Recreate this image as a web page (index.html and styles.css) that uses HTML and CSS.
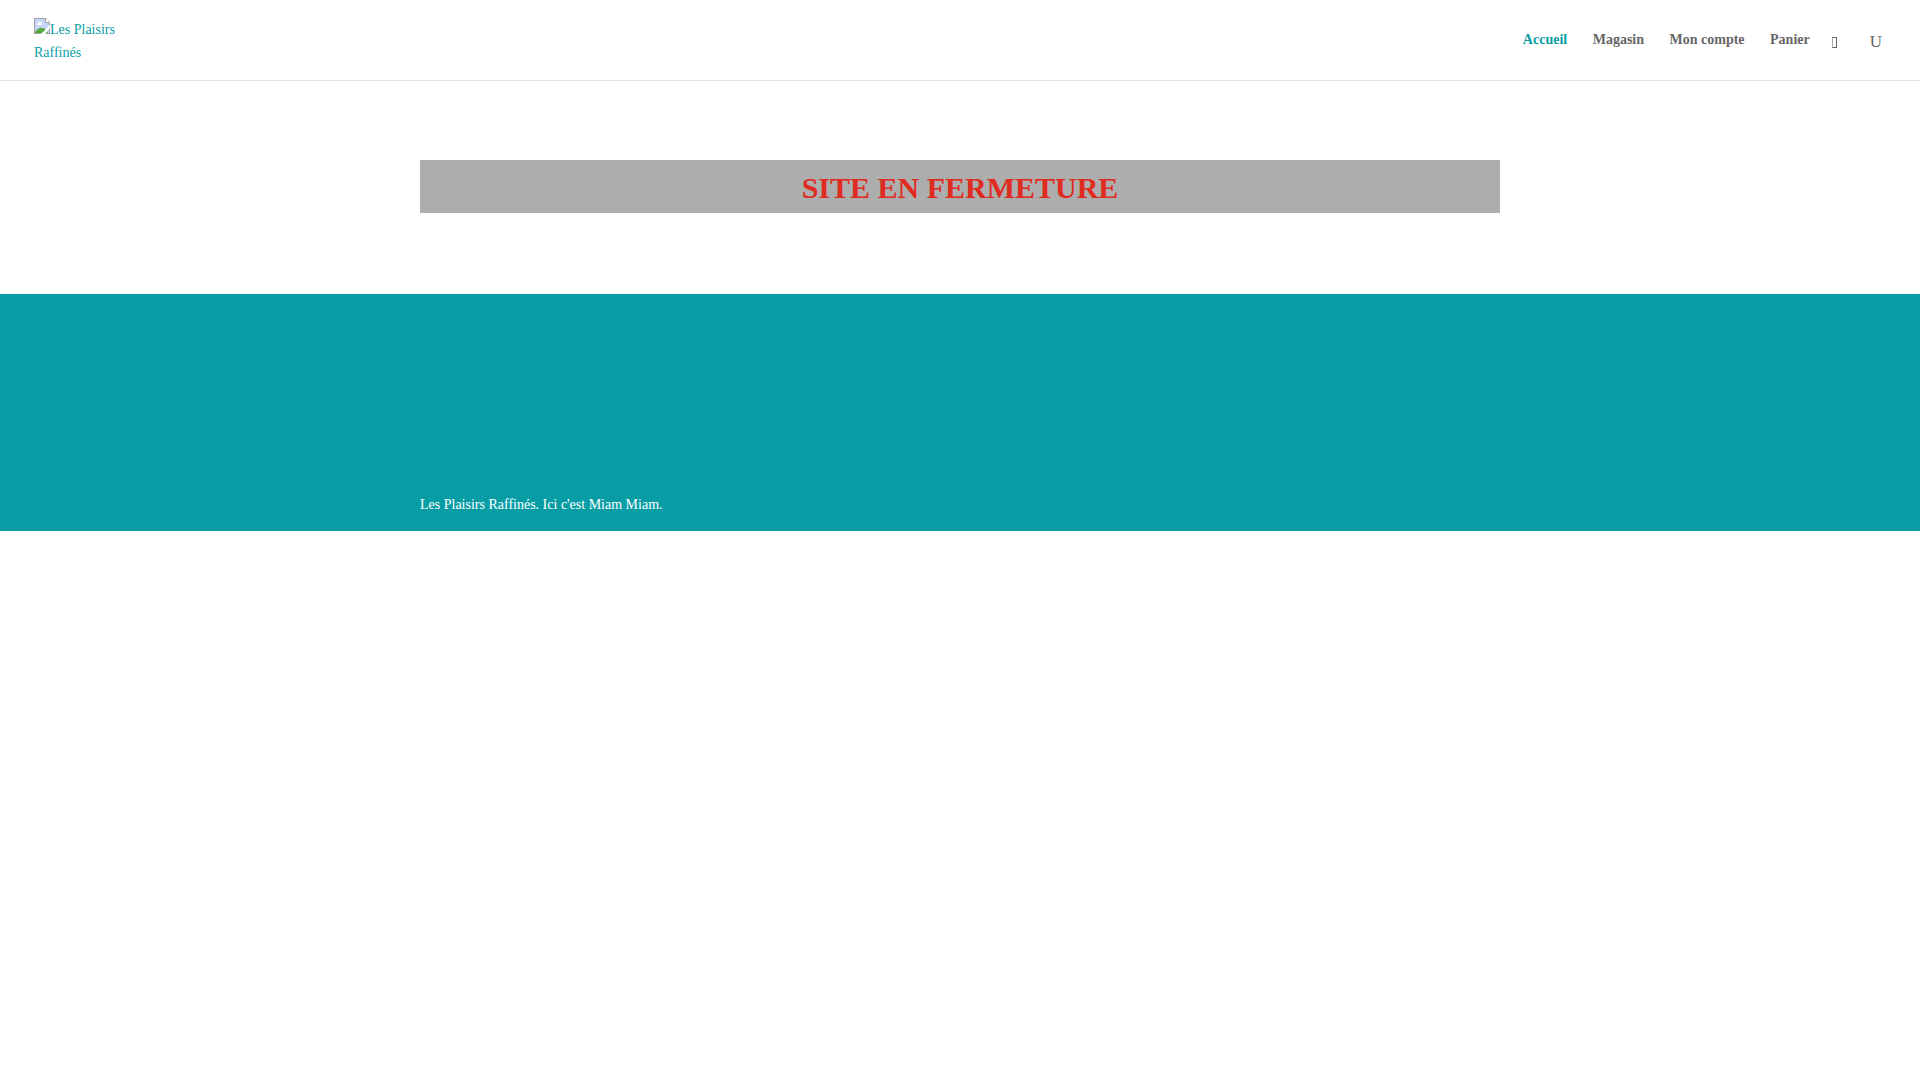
FILE: index.html
```html
<!DOCTYPE html>
<html lang="fr">
<head>
<meta charset="utf-8">
<title>Les Plaisirs Raffinés</title>
<link rel="stylesheet" href="styles.css">
</head>
<body>
<header class="site-header">
  <a class="logo" href="#"><svg class="logo-icon" viewBox="0 0 16 16" aria-hidden="true"><path d="M0 0h12l4 4v12H0z" fill="#a3a3a3"/><path d="M1 1h11l3 3v11H1z" fill="#c5d6fa"/><path d="M3 7V6c0-1 1-1 1-1 0-2 3-2 3 0 1 0 1 1 1 2z" fill="#fff"/><path d="M1 15v-1c2-3 5-5 7-4 3 0 5 2 6 5z" fill="#55a83b"/><path d="M11.500 0v4.500H16" fill="#fff" stroke="#a3a3a3"/><path d="M7 16l9-9v3l-5 6z" fill="#fff"/></svg>Les Plaisirs Raffinés</a>
  <div class="header-tools">
    <nav class="main-nav">
      <a class="nav-link current" href="#">Accueil</a>
      <a class="nav-link" href="#">Magasin</a>
      <a class="nav-link" href="#">Mon compte</a>
      <a class="nav-link" href="#">Panier</a>
    </nav>
    <a class="cart" href="#" aria-label="Voir le panier"></a>
    <button class="search" type="button" aria-label="Rechercher">U</button>
  </div>
</header>
<main class="content">
  <h1 class="notice">SITE EN FERMETURE</h1>
</main>
<footer class="site-footer">
  <p class="footer-text">Les Plaisirs Raffinés. Ici c'est Miam Miam.</p>
</footer>
</body>
</html>
```
FILE: styles.css
```css
* { box-sizing: border-box; }

body {
  margin: 0;
  background: #fff;
  color: #666;
  font: 14px/24px "Liberation Serif", "Times New Roman", serif;
}

a { text-decoration: none; }

.site-header {
  display: flex;
  justify-content: space-between;
  align-items: flex-start;
  padding: 18px 38px 16px 34px;
  border-bottom: 1px solid #e0e0e0;
}

.logo {
  width: 96px;
  color: #089da5;
  line-height: 23px;
}

.logo-icon {
  width: 16px;
  height: 16px;
}

.header-tools {
  display: flex;
  align-items: flex-start;
  padding-top: 10px;
}

.nav-link {
  margin-left: 22px;
  color: #666;
  font-weight: bold;
}

.nav-link.current { color: #089da5; }

.cart {
  width: 5px;
  height: 11px;
  margin: 9px 33px 0 22px;
  border: 1px solid #666;
  border-left-color: #aaa;
}

.search {
  padding: 2px 0 0;
  border: 0;
  background: none;
  color: #666;
  font: 17px/24px "Liberation Serif", "Times New Roman", serif;
}

.content,
.footer-text {
  width: 80%;
  max-width: 1080px;
  margin: 0 auto;
}

.content { padding: 79px 0 81px; }

.notice {
  margin: 0;
  padding: 13px 0 10px;
  background: #adadad;
  color: #e02b20;
  font-size: 30px;
  line-height: 30px;
  text-align: center;
}

.site-footer {
  padding: 199px 0 14px;
  background: #089da5;
  color: #fff;
}
```
